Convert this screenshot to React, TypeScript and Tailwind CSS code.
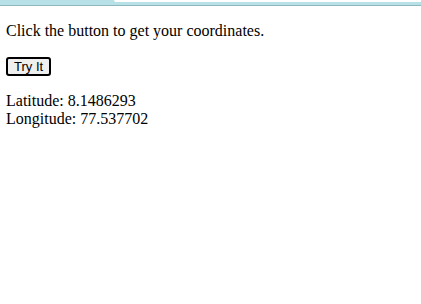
import React from 'react';

export default function App() {
  return (
    <div className="w-[421px] h-[304px] bg-white overflow-hidden">
      <div className="relative h-[6px] bg-[#b7e1e6] border-b border-[#8fb8be]">
        <div className="absolute left-[114px] right-0 top-0 h-[2px] bg-white rounded-bl-[8px]" />
      </div>
      <div className="px-[6px] pt-[16px] text-[16px] leading-[18px] text-black" style={{ fontFamily: '"Liberation Serif", "Times New Roman", serif' }}>
        <p>Click the button to get your coordinates.</p>
        <button
          className="mt-[17px] px-[6px] py-0 bg-[#efefef] border-2 border-black rounded-[3px] text-[13px] leading-[15px] text-black"
          style={{ fontFamily: '"Liberation Sans", Arial, sans-serif' }}
        >
          Try It
        </button>
        <p className="mt-[16px]">
          Latitude: 8.1486293
          <br />
          Longitude: 77.537702
        </p>
      </div>
    </div>
  );
}
